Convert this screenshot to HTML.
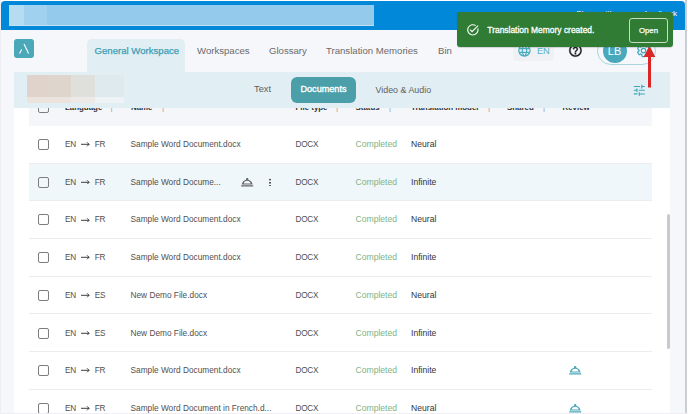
<!DOCTYPE html>
<html><head><meta charset="utf-8">
<style>
*{box-sizing:border-box;margin:0;padding:0}
html,body{width:688px;height:414px;overflow:hidden;background:#fff;font-family:"Liberation Sans",sans-serif}
.a{position:absolute}
#app{left:1px;top:1px;width:684px;height:412px;background:#f6f7fb;overflow:hidden}
#lcol{left:0;top:0;width:1px;height:414px;background:#efeff3}
#rshadow{left:684.6px;top:0;width:2px;height:413px;background:linear-gradient(90deg,#d5d8dd,#b9bdc4 60%,#e6e7ea)}
#topbar{left:1px;top:1px;width:684px;height:28.5px;background:#0288d8;border-radius:4px 4px 0 0}
#blur1{left:9px;top:5px;width:365px;height:21px;background:#94caeb}
#feed{left:520px;top:9px;width:157px;text-align:right;color:#fff;font-size:8px;white-space:nowrap}
#logo{left:14px;top:39px;width:20px;height:19px;background:#4aa8b8;border-radius:3px}
.tab{top:45px;font-size:9.6px;color:#6b6b6b;white-space:nowrap}
#acttab{left:87px;top:39px;width:98px;height:34px;background:#e1eef4;border-radius:5px 5px 0 0}
#subbar{left:14px;top:72px;width:656px;height:35.5px;background:#e1eef4}
#card{left:14px;top:107px;width:656px;height:310px;background:#fff}
#hdr{left:29px;top:94px;width:623px;height:32px;background:#f5f6fa}
.h{top:103px;font-size:7.9px;font-weight:bold;color:#333;white-space:nowrap}
.hs{top:103px;font-size:7.9px;color:#999}
.row{left:29px;width:623px;height:37.5px;border-bottom:1px solid #ebecef}
.c{font-size:8.6px;color:#4f4f4f;white-space:nowrap;position:absolute;top:13px}
.cap{letter-spacing:-0.25px;font-size:8.2px;top:14px}
.cb{position:absolute;left:9px;top:13px;width:11px;height:11px;border:1.5px solid #7d7d7d;border-radius:2px}
.sub{top:84px;font-size:9.3px;color:#5f5f5f;white-space:nowrap}
#docpill{left:290.5px;top:77px;width:65.5px;height:25.5px;background:#4a9fa9;border-radius:6px}
.kb{width:2px;height:8.5px;background:radial-gradient(circle,#555 0.9px,transparent 1.1px) 0 0/2px 3.2px}
#scroll{left:667px;top:214px;width:3px;height:135px;background:#c9c9cc;border-radius:2px}
#langbtn{left:512.5px;top:38px;width:41px;height:23px;background:#eff1f5;border-radius:4px}
#pill{left:597px;top:37px;width:59px;height:28px;border:1px solid #a8d5dc;border-radius:14px}
#avatar{left:602.6px;top:38.5px;width:24px;height:24px;border-radius:50%;background:#4aa8bd;color:#fff;font-size:11px;text-align:center;line-height:24px}
#toast{left:456.5px;top:12px;width:216px;height:35px;background:#307c34;border-radius:3px;box-shadow:0 0.5px 1px rgba(0,0,0,.15)}
#ttext{left:30.8px;top:13px;font-size:8.45px;color:#fff;white-space:nowrap;-webkit-text-stroke:0.3px #fff}
#openbtn{left:172.5px;top:6px;width:39px;height:25px;border:1px solid #c5dcc5;border-radius:3px;color:#fff;font-size:7.8px;-webkit-text-stroke:0.25px #fff;text-align:center;line-height:23px}
</style></head><body>
<div id="lcol" class="a"></div>
<div id="app" class="a"></div>
<div id="rshadow" class="a"></div>
<div id="topbar" class="a"></div>
<div id="blur1" class="a"><div class="a" style="left:0;top:0;width:15px;height:21px;background:#b6dcf2"></div><div class="a" style="left:15px;top:0;width:23px;height:21px;background:#a0d1ee"></div><div class="a" style="left:0;top:20px;width:365px;height:1px;background:#c2e2f4"></div></div>
<div id="feed" class="a">Share with us your feedback</div>
<div id="logo" class="a"><svg width="20" height="19" viewBox="0 0 20 19" style="position:absolute;left:0;top:0"><path d="M10 5.1 L14.6 14.6 M7.7 10.4 L5.5 14.6" stroke="#fff" stroke-width="1.1" fill="none"/></svg></div>
<div id="acttab" class="a"></div>
<div class="a tab" style="left:94.5px;color:#3d9fb5;-webkit-text-stroke:0.25px #3d9fb5">General Workspace</div>
<div class="a tab" style="left:197px">Workspaces</div>
<div class="a tab" style="left:269px">Glossary</div>
<div class="a tab" style="left:326px">Translation Memories</div>
<div class="a tab" style="left:438px">Bin</div>
<div id="card" class="a"></div>
<div id="hdr" class="a"></div>
<div class="a h" style="left:65px">Language</div><div class="a hs" style="left:110.5px">|</div>
<div class="a h" style="left:131px">Name</div><div class="a hs" style="left:162px">|</div>
<div class="a h" style="left:295.5px">File type</div><div class="a hs" style="left:336px">|</div>
<div class="a h" style="left:355.5px">Status</div><div class="a hs" style="left:389px">|</div>
<div class="a h" style="left:411px">Translation model</div><div class="a hs" style="left:488px">|</div>
<div class="a h" style="left:507px">Shared</div><div class="a hs" style="left:543px">|</div>
<div class="a h" style="left:562.5px">Review</div>
<div class="a cb" style="left:38px;top:102px"></div>
<div class="a row" style="top:126.0px;"><div class="cb"></div><div class="c cap" style="left:36px">EN</div><svg class="a" style="left:52px;top:16.2px" width="8.6" height="4.6" viewBox="0 0 8.6 4.6" fill="none" stroke="#333" stroke-width="0.95"><path d="M0 2.3H8.1M6.1 0.3L8.1 2.3L6.1 4.3"/></svg><div class="c cap" style="left:65.8px">FR</div><div class="c" style="left:101.5px;font-size:8.3px">Sample Word Document.docx</div><div class="c cap" style="left:266.5px">DOCX</div><div class="c" style="left:326.5px;color:#80b487">Completed</div><div class="c" style="left:382px;color:#333">Neural</div></div>
<div class="a row" style="top:163.7px;background:#f0f7fa;"><div class="cb"></div><div class="c cap" style="left:36px">EN</div><svg class="a" style="left:52px;top:16.2px" width="8.6" height="4.6" viewBox="0 0 8.6 4.6" fill="none" stroke="#333" stroke-width="0.95"><path d="M0 2.3H8.1M6.1 0.3L8.1 2.3L6.1 4.3"/></svg><div class="c cap" style="left:65.8px">FR</div><div class="c" style="left:101.5px;font-size:8.3px">Sample Word Docume...</div><svg class="a" style="left:211px;top:11px" width="14.4" height="14.4" viewBox="0 0 24 24" fill="#666"><path d="M2 17h20v2H2zM21 16c-.27-4.07-3.25-7.4-7.16-8.21.1-.24.16-.51.16-.79 0-1.1-.9-2-2-2s-2 .9-2 2c0 .28.06.55.16.79C6.25 8.6 3.27 11.93 3 16h18zm-9-6.42c2.95 0 5.47 2.19 5.93 4.42H6.07c.46-2.23 2.98-4.42 5.93-4.42z"/></svg><div class="a kb" style="left:240px;top:14px"></div><div class="c cap" style="left:266.5px">DOCX</div><div class="c" style="left:326.5px;color:#80b487">Completed</div><div class="c" style="left:382px;color:#333">Infinite</div></div>
<div class="a row" style="top:201.4px;"><div class="cb"></div><div class="c cap" style="left:36px">EN</div><svg class="a" style="left:52px;top:16.2px" width="8.6" height="4.6" viewBox="0 0 8.6 4.6" fill="none" stroke="#333" stroke-width="0.95"><path d="M0 2.3H8.1M6.1 0.3L8.1 2.3L6.1 4.3"/></svg><div class="c cap" style="left:65.8px">FR</div><div class="c" style="left:101.5px;font-size:8.3px">Sample Word Document.docx</div><div class="c cap" style="left:266.5px">DOCX</div><div class="c" style="left:326.5px;color:#80b487">Completed</div><div class="c" style="left:382px;color:#333">Neural</div></div>
<div class="a row" style="top:239.10000000000002px;"><div class="cb"></div><div class="c cap" style="left:36px">EN</div><svg class="a" style="left:52px;top:16.2px" width="8.6" height="4.6" viewBox="0 0 8.6 4.6" fill="none" stroke="#333" stroke-width="0.95"><path d="M0 2.3H8.1M6.1 0.3L8.1 2.3L6.1 4.3"/></svg><div class="c cap" style="left:65.8px">FR</div><div class="c" style="left:101.5px;font-size:8.3px">Sample Word Document.docx</div><div class="c cap" style="left:266.5px">DOCX</div><div class="c" style="left:326.5px;color:#80b487">Completed</div><div class="c" style="left:382px;color:#333">Infinite</div></div>
<div class="a row" style="top:276.8px;"><div class="cb"></div><div class="c cap" style="left:36px">EN</div><svg class="a" style="left:52px;top:16.2px" width="8.6" height="4.6" viewBox="0 0 8.6 4.6" fill="none" stroke="#333" stroke-width="0.95"><path d="M0 2.3H8.1M6.1 0.3L8.1 2.3L6.1 4.3"/></svg><div class="c cap" style="left:65.8px">ES</div><div class="c" style="left:101.5px;font-size:8.3px">New Demo File.docx</div><div class="c cap" style="left:266.5px">DOCX</div><div class="c" style="left:326.5px;color:#80b487">Completed</div><div class="c" style="left:382px;color:#333">Neural</div></div>
<div class="a row" style="top:314.5px;"><div class="cb"></div><div class="c cap" style="left:36px">EN</div><svg class="a" style="left:52px;top:16.2px" width="8.6" height="4.6" viewBox="0 0 8.6 4.6" fill="none" stroke="#333" stroke-width="0.95"><path d="M0 2.3H8.1M6.1 0.3L8.1 2.3L6.1 4.3"/></svg><div class="c cap" style="left:65.8px">ES</div><div class="c" style="left:101.5px;font-size:8.3px">New Demo File.docx</div><div class="c cap" style="left:266.5px">DOCX</div><div class="c" style="left:326.5px;color:#80b487">Completed</div><div class="c" style="left:382px;color:#333">Infinite</div></div>
<div class="a row" style="top:352.20000000000005px;"><div class="cb"></div><div class="c cap" style="left:36px">EN</div><svg class="a" style="left:52px;top:16.2px" width="8.6" height="4.6" viewBox="0 0 8.6 4.6" fill="none" stroke="#333" stroke-width="0.95"><path d="M0 2.3H8.1M6.1 0.3L8.1 2.3L6.1 4.3"/></svg><div class="c cap" style="left:65.8px">FR</div><div class="c" style="left:101.5px;font-size:8.3px">Sample Word Document.docx</div><div class="c cap" style="left:266.5px">DOCX</div><div class="c" style="left:326.5px;color:#80b487">Completed</div><div class="c" style="left:382px;color:#333">Infinite</div><svg class="a" style="left:539px;top:11px" width="14.4" height="14.4" viewBox="0 0 24 24" fill="#4aa8b8"><path d="M2 17h20v2H2zM21 16c-.27-4.07-3.25-7.4-7.16-8.21.1-.24.16-.51.16-.79 0-1.1-.9-2-2-2s-2 .9-2 2c0 .28.06.55.16.79C6.25 8.6 3.27 11.93 3 16h18zm-9-6.42c2.95 0 5.47 2.19 5.93 4.42H6.07c.46-2.23 2.98-4.42 5.93-4.42z"/></svg></div>
<div class="a row" style="top:389.90000000000003px;"><div class="cb"></div><div class="c cap" style="left:36px">EN</div><svg class="a" style="left:52px;top:16.2px" width="8.6" height="4.6" viewBox="0 0 8.6 4.6" fill="none" stroke="#333" stroke-width="0.95"><path d="M0 2.3H8.1M6.1 0.3L8.1 2.3L6.1 4.3"/></svg><div class="c cap" style="left:65.8px">FR</div><div class="c" style="left:101.5px;font-size:8.3px">Sample Word Document in French.d...</div><div class="c cap" style="left:266.5px">DOCX</div><div class="c" style="left:326.5px;color:#80b487">Completed</div><div class="c" style="left:382px;color:#333">Neural</div><svg class="a" style="left:539px;top:11px" width="14.4" height="14.4" viewBox="0 0 24 24" fill="#4aa8b8"><path d="M2 17h20v2H2zM21 16c-.27-4.07-3.25-7.4-7.16-8.21.1-.24.16-.51.16-.79 0-1.1-.9-2-2-2s-2 .9-2 2c0 .28.06.55.16.79C6.25 8.6 3.27 11.93 3 16h18zm-9-6.42c2.95 0 5.47 2.19 5.93 4.42H6.07c.46-2.23 2.98-4.42 5.93-4.42z"/></svg></div>
<div id="subbar" class="a"></div>
<div id="blur2" class="a" style="left:27px;top:74.5px;width:97px;height:28px;background:#dfeaee">
 <div class="a" style="left:0;top:0;width:20px;height:22.5px;background:#dfd3cb"></div>
 <div class="a" style="left:20px;top:0;width:24px;height:22.5px;background:#ded5cd"></div>
 <div class="a" style="left:44px;top:0;width:24px;height:22.5px;background:#dfe0dc"></div>
 <div class="a" style="left:0;top:22.5px;width:44px;height:5.5px;background:#ece3df"></div>
 <div class="a" style="left:44px;top:22.5px;width:24px;height:5.5px;background:#ece9e6"></div>
 <div class="a" style="left:68px;top:22.5px;width:29px;height:5.5px;background:#eef4f5"></div>
</div>
<div class="a sub" style="left:254px">Text</div>
<div id="docpill" class="a"></div>
<div class="a sub" style="left:300.5px;top:84px;color:#fff;font-size:9.1px;-webkit-text-stroke:0.35px #fff">Documents</div>
<div class="a sub" style="left:375.5px;font-size:8.9px;top:84.5px">Video &amp; Audio</div>
<svg class="a" style="left:631.9px;top:83.2px" width="14.65" height="14.65" viewBox="0 0 24 24" fill="#3fa5b9"><path d="M3 17v1.7h6v-1.7H3zM3 5v1.7h10V5H3zm10 16v-2h8v-1.7h-8v-2h-2v5.7h2zM7 9v2H3v1.7h4v2h2V9H7zm14 3.7V11H11v1.7h10zm-6-3.7h2V6.7h4V5h-4V3h-2v6z"/></svg>
<div id="scroll" class="a"></div>
<div id="langbtn" class="a"></div>
<svg class="a" style="left:517.35px;top:43.15px" width="14.9" height="14.9" viewBox="0 0 24 24" fill="#4aacbe"><path d="M11.99 2C6.47 2 2 6.48 2 12s4.47 10 9.99 10C17.52 22 22 17.52 22 12S17.52 2 11.99 2zm6.93 6h-2.950c-.32-1.25-.78-2.45-1.38-3.56 1.84.63 3.37 1.91 4.33 3.56zM12 4.04c.83 1.2 1.48 2.53 1.91 3.96h-3.82c.43-1.430 1.08-2.76 1.91-3.96zM4.26 14C4.1 13.36 4 12.69 4 12s.1-1.36.26-2h3.38c-.08.66-.14 1.32-.14 2 0 .68.06 1.34.14 2H4.26zm.82 2h2.95c.32 1.25.78 2.45 1.38 3.56-1.84-.63-3.37-1.9-4.33-3.56zm2.95-8H5.08c.96-1.66 2.49-2.93 4.33-3.56C8.81 5.55 8.35 6.75 8.03 8zM12 19.96c-.83-1.2-1.48-2.53-1.91-3.96h3.82c-.43 1.43-1.08 2.76-1.91 3.96zM14.34 14H9.66c-.09-.66-.16-1.32-.16-2 0-.68.07-1.35.16-2h4.68c.09.65.16 1.32.16 2 0 .68-.07 1.34-.16 2zm.25 5.56c.6-1.11 1.06-2.31 1.38-3.56h2.95c-.96 1.65-2.49 2.93-4.33 3.56zM16.36 14c.08-.66.14-1.32.14-2 0-.68-.06-1.34-.14-2h3.38c.16.64.26 1.31.26 2s-.1 1.36-.26 2h-3.38z"/></svg>
<div class="a" style="left:537px;top:45.7px;font-size:9.3px;letter-spacing:-0.3px;color:#55b0c1">EN</div>
<svg class="a" style="left:567.95px;top:43.45px" width="14.9" height="14.9" viewBox="0 0 24 24" fill="#1e1e1e" stroke="#1e1e1e" stroke-width="0.6"><path d="M11 18h2v-2h-2v2zm1-16C6.48 2 2 6.48 2 12s4.48 10 10 10 10-4.48 10-10S17.52 2 12 2zm0 18c-4.41 0-8-3.59-8-8s3.59-8 8-8 8 3.59 8 8-3.59 8-8 8zm0-14c-2.21 0-4 1.79-4 4h2c0-1.1.9-2 2-2s2 .9 2 2c0 2-3 1.75-3 5h2c0-2.25 3-2.5 3-5 0-2.21-1.79-4-4-4z"/></svg>
<div id="pill" class="a"></div>
<div id="avatar" class="a">LB</div>
<svg class="a" style="left:635.8px;top:43.1px" width="15" height="15" viewBox="0 0 24 24"><path d="M19.14 12.94c.04-.3.06-.61.06-.94 0-.32-.02-.64-.07-.94l2.03-1.58a.49.49 0 0 0 .12-.61l-1.920-3.32a.488.488 0 0 0-.59-.22l-2.39.96c-.5-.38-1.03-.7-1.62-.94l-.36-2.54a.484.484 0 0 0-.48-.41h-3.840c-.24 0-.43.17-.47.41l-.36 2.54c-.59.24-1.13.57-1.62.94l-2.39-.96c-.22-.08-.47 0-.59.22L2.74 8.87c-.12.21-.08.47.12.61l2.03 1.58c-.05.3-.09.63-.09.94s.02.64.07.94l-2.03 1.58a.49.49 0 0 0-.12.61l1.92 3.32c.12.22.37.29.59.22l2.39-.96c.5.38 1.03.7 1.62.94l.36 2.54c.05.24.24.41.48.41h3.84c.24 0 .44-.17.47-.41l.36-2.54c.59-.24 1.13-.56 1.62-.94l2.39.96c.22.08.47 0 .59-.22l1.92-3.32c.12-.22.07-.47-.12-.61l-2.01-1.58zM12 15.6c-1.98 0-3.6-1.62-3.6-3.6s1.62-3.6 3.6-3.6 3.6 1.62 3.6 3.6-1.62 3.6-3.6 3.6z" fill="none" stroke="#3da7bd" stroke-width="2"/></svg>
<div id="toast" class="a">
 <svg class="a" style="left:9.15px;top:10.65px" width="13.7" height="13.7" viewBox="0 0 24 24" fill="#f4f8f4"><path d="M22 5.18L10.59 16.6l-4.24-4.24 1.41-1.41 2.83 2.83 10-10L22 5.18zm-2.21 5.04c.13.57.21 1.17.21 1.78 0 4.42-3.58 8-8 8s-8-3.58-8-8 3.58-8 8-8c1.58 0 3.04.46 4.28 1.25l1.44-1.44C16.1 2.67 14.130 2 12 2 6.48 2 2 6.48 2 12s4.48 10 10 10 10-4.48 10-10c0-1.19-.22-2.33-.6-3.39l-1.61 1.61z"/></svg>
 <div id="ttext" class="a">Translation Memory created.</div>
 <div id="openbtn" class="a">Open</div>
</div>
<div class="a" style="left:0;top:412.5px;width:688px;height:1.5px;background:#efeff3"></div>
<svg class="a" style="left:640px;top:44px" width="20" height="46" viewBox="0 0 20 46"><path d="M9.5 1.7L15.3 13H3.7z" fill="#dc2626"/><rect x="8" y="11" width="3" height="32.5" fill="#dc2626"/></svg>
</body></html>
